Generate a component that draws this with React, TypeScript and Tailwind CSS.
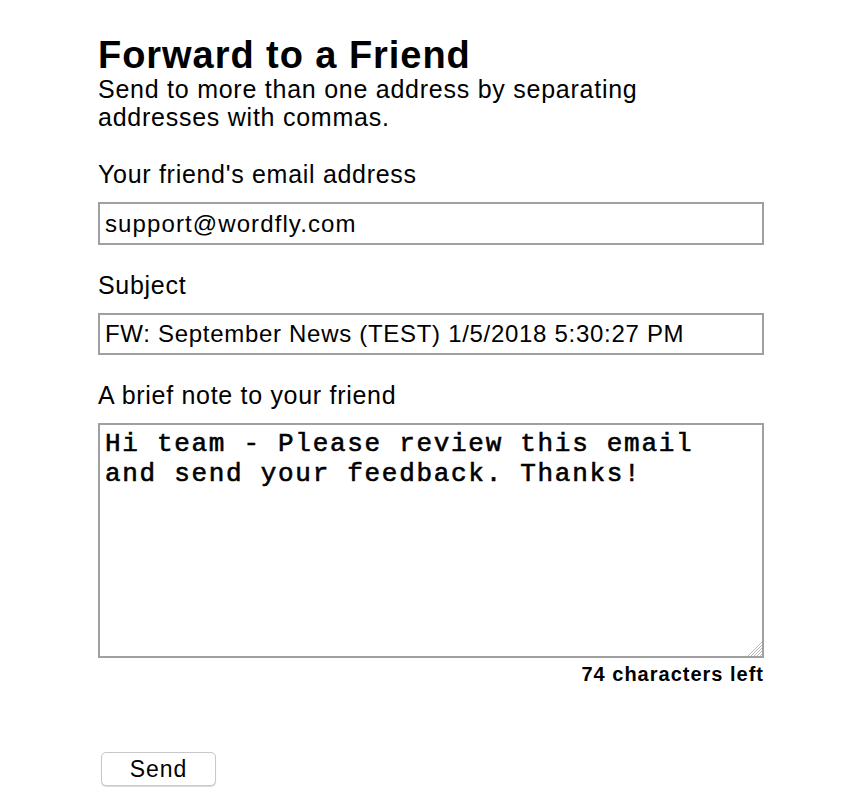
export default function App() {
  return (
    <div className="w-[866px] h-[804px] bg-white" style={{ fontFamily: '"Liberation Sans", Arial, sans-serif' }}>
      <div className="ml-[98px] w-[666px] pt-[34px] text-black">
        <h1 className="text-[38px] leading-[42px] font-bold tracking-[0.95px]">Forward to a Friend</h1>
        <p className="-mt-[1px] text-[25px] leading-[28px] tracking-[0.75px]">Send to more than one address by separating addresses with commas.</p>
        <div className="mt-[29px] text-[25px] leading-[28px] tracking-[0.7px]">Your friend's email address</div>
        <div className="mt-[14px] h-[43px] border-2 border-[#a0a0a0] flex items-center px-[5px] text-[24px] tracking-[1.1px]">support@wordfly.com</div>
        <div className="mt-[26px] text-[25px] leading-[28px] tracking-[0.7px]">Subject</div>
        <div className="mt-[14px] h-[42px] border-2 border-[#a0a0a0] flex items-center px-[5px] text-[24px] tracking-[0.7px]">FW: September News (TEST) 1/5/2018 5:30:27 PM</div>
        <div className="mt-[26px] text-[25px] leading-[28px] tracking-[0.7px]">A brief note to your friend</div>
        <div className="relative mt-[14px] h-[235px] border-2 border-[#a0a0a0] px-[5px] pt-[4px] text-[26px] leading-[30px] tracking-[1.7px]" style={{ fontFamily: '"Liberation Mono", "Courier New", monospace' }}>
          <div style={{ WebkitTextStroke: '0.6px black' }}>Hi team - Please review this email<br />and send your feedback. Thanks!</div>
          <svg className="absolute right-0 bottom-0" width="16" height="16" viewBox="0 0 16 16">
            <line x1="16" y1="2" x2="2" y2="16" stroke="#b8b8b8" strokeWidth="1" />
            <line x1="16" y1="5" x2="5" y2="16" stroke="#b8b8b8" strokeWidth="1" />
            <line x1="16" y1="8" x2="8" y2="16" stroke="#b8b8b8" strokeWidth="1" />
            <line x1="16" y1="11" x2="11" y2="16" stroke="#b8b8b8" strokeWidth="1" />
            <line x1="16" y1="14" x2="14" y2="16" stroke="#b8b8b8" strokeWidth="1" />
          </svg>
        </div>
        <div className="mt-[4px] text-right text-[20px] leading-[24px] font-bold tracking-[1px]">74 characters left</div>
        <button className="mt-[66px] ml-[3px] w-[115px] h-[34px] rounded-[5px] border border-[#c8c8c8] bg-white shadow-[0_1px_1px_rgba(0,0,0,0.15)] text-[23px] leading-none tracking-[1px] flex items-center justify-center">Send</button>
      </div>
    </div>
  );
}
